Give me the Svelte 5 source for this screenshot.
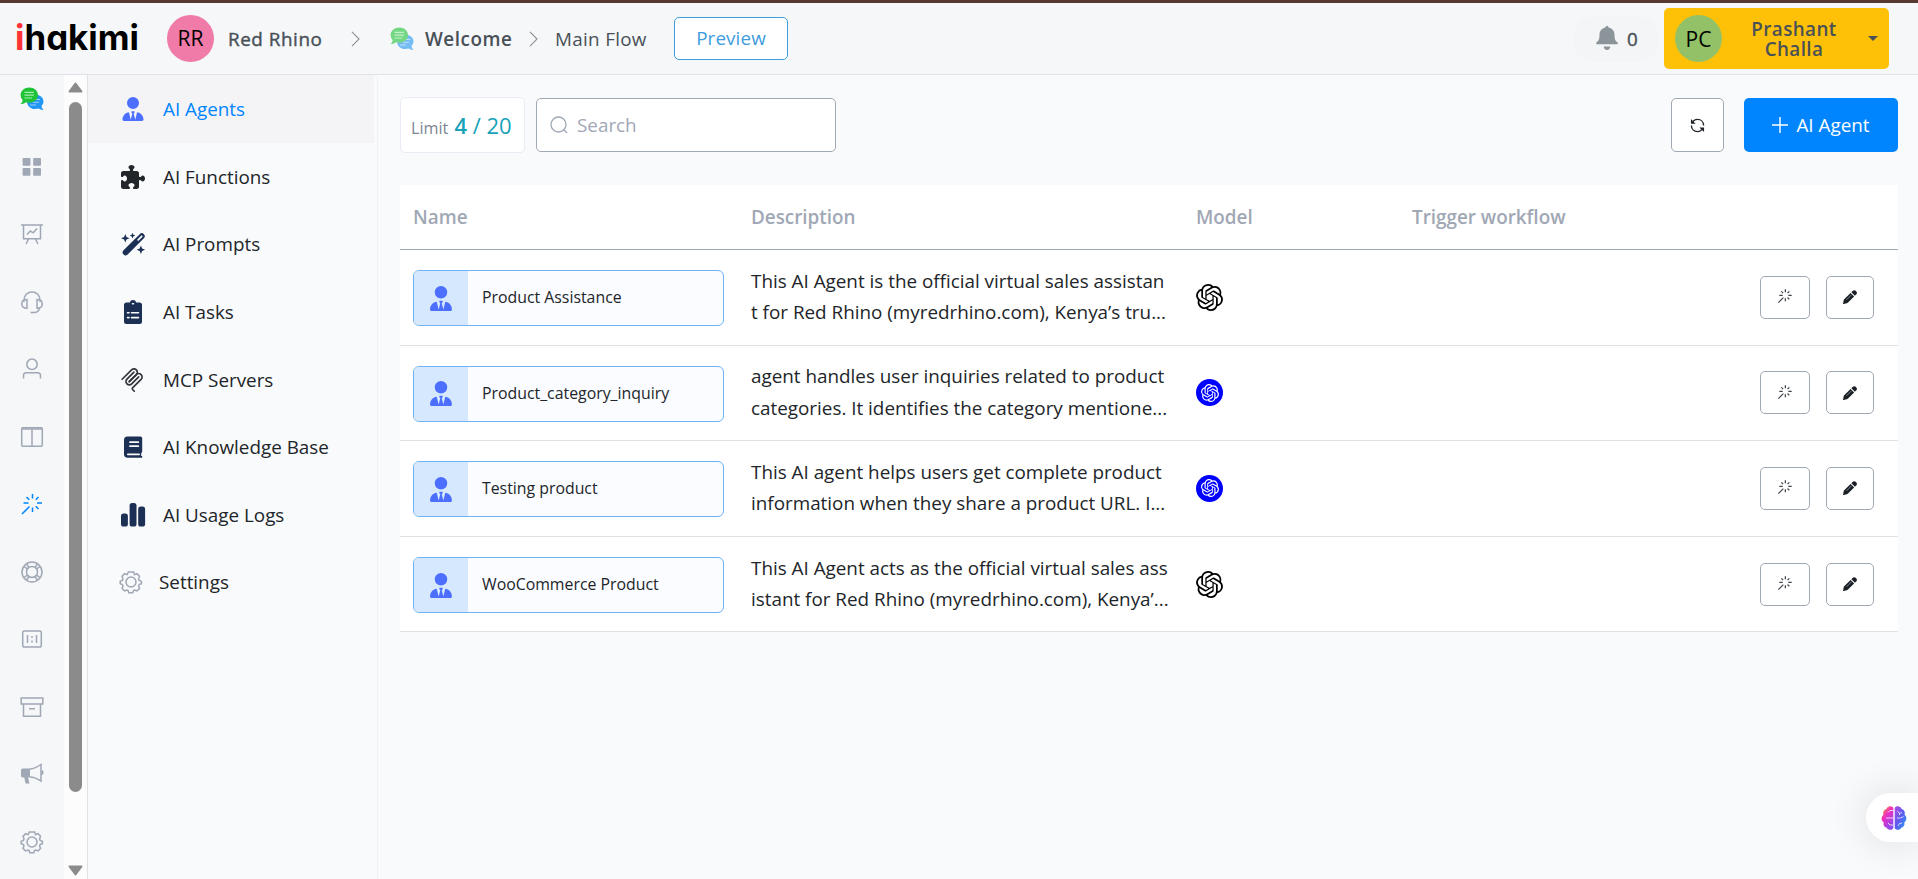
<script>
const railIcons = [
    { name: 'dashboard', body: '<g fill="currentColor" stroke="none"><rect x="2.6" y="3" width="7.8" height="7.8" rx=".8"/><rect x="13.2" y="3" width="7.8" height="7.8" rx=".8"/><rect x="2.6" y="13" width="7.8" height="7.8" rx=".8"/><rect x="13.2" y="13" width="7.8" height="7.8" rx=".8"/></g>' },
    { name: 'reports', body: '<path d="M1 2.9h22M3.5 3v13.7h17V3M8.5 17l-2.400 5M15.500 17l2.400 5M7 12.500l3.300-3.500 3 1.800L17 6.500"/>' },
    { name: 'support', body: '<path d="M4 12V9.500C4 5.500 7.500 2 12 2s8 3.500 8 7.500V12M7 9.500v8.700c-3.300 0-5.300-1.300-5.300-4.300S3.700 9.500 7 9.500zM17 9.500v8.700c3.300 0 5.300-1.300 5.300-4.300S20.300 9.500 17 9.500zM19.500 17.500c0 3-2.500 4.900-5.500 4.900h-3.500"/>' },
    { name: 'contacts', body: '<circle cx="12" cy="7.300" r="5.200"/><path d="M3.500 21.500v-3c0-1.800 1.200-2.800 3-2.800h11c1.800 0 3 1 3 2.800v3"/>' },
    { name: 'board', body: '<rect x="1.700" y="2.700" width="20.600" height="18.600" rx="1"/><path d="M1.700 4h20.600M12 4v17"/>' },
    { name: 'ai', active: true, body: '<path d="M12.500 2v4.500M12.500 15.500V20M3.500 11h5M17 11h5M6.500 5l2.700 2.700M18.500 5l-2.700 2.700M18.500 17l-2.700-2.700M2 22l7.500-7.500"/>' },
    { name: 'help', body: '<circle cx="12" cy="12" r="10"/><circle cx="12" cy="12" r="5.500"/><path d="M4.300 6.700l3 2.200M6.700 4.300l2.200 3M19.700 6.700l-3 2.200M17.300 4.300l-2.200 3M4.300 17.300l3-2.200M6.700 19.700l2.200-3M19.700 17.300l-3-2.200M17.300 19.700l-2.200-3"/>' },
    { name: 'limits', body: '<rect x="2.700" y="4" width="18.600" height="16" rx="1.800"/><path d="M7.500 8v8M16.500 8v8M12 9v2M12 13.500v2"/>' },
    { name: 'archive', body: '<path d="M1.200 3h21.600v6H1.200zM3.500 9v12.300h17V9M9 13.800h6"/>' },
    { name: 'campaigns', body: '<path d="M1 8.500c0-1.200.8-2 2-2h7v9H8l1.500 6H5.500l-1.200-6H3c-1.200 0-2-.8-2-2z" fill="currentColor" stroke="none"/><path d="M10 7c4-.3 7.500-2 11-4.500v16.500c-3.500-2.200-7-3.800-11-4M22 8.500c1 .8 1 3.200 0 4"/>' },
    { name: 'settings', body: '<path d="M9.300 2h5.400l.7 2.600 2.600-.9 2.500 2.600-.9 2.600.6 1.500 2.200.8v2.500l-2.200.8-.6 1.500 1 2.400-2.500 2.500-2.500-.9-1.100.5-.7 2.200h-4l-.7-2.200-1.100-.5-2.500.9L3 18.400l1-2.400-.6-1.500-2.200-.8v-2.500l2.200-.8.6-1.500-.9-2.600 2.500-2.600 2.600.9z"/><circle cx="12" cy="12" r="5"/>' }
];

const gear = railIcons[railIcons.length - 1].body;
const tie = '<path d="M96 128a128 128 0 1 0 256 0A128 128 0 1 0 96 128zm94.500 200.200l18.600 31L175.800 483.100l-36-146.900c-2-8.100-9.800-13.400-17.900-11.300C51.900 342.400 0 405.800 0 481.300c0 17 13.800 30.700 30.700 30.700H417.300c17 0 30.700-13.800 30.700-30.700c0-75.500-51.900-138.900-121.900-156.400c-8.100-2-15.900 3.300-17.900 11.300l-36 146.900L238.900 359.200l18.600-31c6.400-10.700-1.300-24.200-13.700-24.200h-39.500c-12.400 0-20.100 13.600-13.700 24.200z"/>';

const menu = [
    { label: 'AI Agents', active: true, box: '-32 0 512 512', color: '#4c6fff', body: tie },
    { label: 'AI Functions', box: '0 0 512 512', color: '#22262b', body: '<path d="M192 104.800c0-9.200-5.800-17.300-13.200-22.800C167.200 73.300 160 61.300 160 48c0-26.500 28.700-48 64-48s64 21.500 64 48c0 13.300-7.200 25.300-18.800 34c-7.400 5.500-13.200 13.600-13.200 22.800c0 12.800 10.400 23.200 23.200 23.200l56.800 0c26.500 0 48 21.500 48 48l0 56.800c0 12.800 10.400 23.200 23.200 23.200c9.200 0 17.300-5.800 22.800-13.200c8.700-11.600 20.700-18.800 34-18.800c26.500 0 48 28.700 48 64s-21.500 64-48 64c-13.300 0-25.300-7.200-34-18.800c-5.500-7.400-13.600-13.200-22.800-13.200c-12.800 0-23.200 10.400-23.200 23.200L384 464c0 26.500-21.500 48-48 48l-56.800 0c-12.800 0-23.200-10.400-23.200-23.200c0-9.200 5.800-17.300 13.200-22.800c11.600-8.700 18.800-20.700 18.800-34c0-26.500-28.700-48-64-48s-64 21.500-64 48c0 13.300 7.200 25.300 18.800 34c7.400 5.500 13.200 13.600 13.200 22.800c0 12.800-10.400 23.200-23.200 23.200L48 512c-26.500 0-48-21.500-48-48L0 343.200C0 330.400 10.400 320 23.200 320c9.200 0 17.300 5.800 22.800 13.200C54.700 344.800 66.700 352 80 352c26.500 0 48-28.700 48-64s-21.500-64-48-64c-13.300 0-25.300 7.200-34 18.800C40.500 250.200 32.400 256 23.200 256C10.400 256 0 245.600 0 232.800L0 176c0-26.500 21.500-48 48-48l120.800 0c12.800 0 23.200-10.400 23.200-23.200z"/>' },
    { label: 'AI Prompts', box: '0 0 24 24', color: '#1c2f55', body: '<path d="M4.600 20.400L20.800 4.200" stroke="currentColor" stroke-width="5.800" stroke-linecap="round"/><path d="M17.200 7.800l3.500-3.500" stroke="#f9fafc" stroke-width="1.800" stroke-linecap="round"/><path d="M4.300 2l1.200 3 3 1.200-3 1.200-1.200 3-1.200-3-3-1.200 3-1.200zM11.500.8l.8 2 2 .8-2 .8-.8 2-.8-2-2-.8 2-.8zM19.900 13.500l1.200 3 3 1.200-3 1.200-1.200 3-1.200-3-3-1.200 3-1.200z"/>' },
    { label: 'AI Tasks', box: '0 0 24 24', color: '#1c2f55', body: '<path d="M5.500 2.500h3.300a3.300 3.300 0 0 1 6.400 0h3.300A2.500 2.500 0 0 1 21 5v16.500a2.500 2.500 0 0 1-2.500 2.500h-13A2.500 2.500 0 0 1 3 21.500V5a2.500 2.500 0 0 1 2.500-2.500z"/><path d="M10.500 12.700h7M10.500 17.600h7M6.500 12.700h1.500M6.500 17.600h1.500M11.500 3.700h1" stroke="#f9fafc" stroke-width="1.600" stroke-linecap="round"/>' },
    { label: 'MCP Servers', box: '10 4 172 172', color: '#32363b', body: '<g fill="none" stroke="currentColor" stroke-width="12" stroke-linecap="round"><path d="M18 84.853L85.882 16.971c9.373-9.373 24.569-9.373 33.941 0s9.373 24.568 0 33.941L68.558 102.177"/><path d="M69.265 101.470L119.823 50.912c9.373-9.373 24.569-9.373 33.942 0l.353.353c9.373 9.373 9.373 24.569 0 33.941L92.725 146.600c-3.124 3.124-3.124 8.189 0 11.313l12.606 12.607"/><path d="M102.853 33.941L52.648 84.146c-9.372 9.372-9.372 24.568 0 33.941s24.569 9.372 33.941 0L136.794 67.882"/></g>' },
    { label: 'AI Knowledge Base', box: '0 0 24 24', color: '#1c2f55', body: '<path d="M6.500 1.500h13A1.700 1.700 0 0 1 21.200 3v13.500c0 .7-.4 1.200-1 1.500v3h1v1.800H6.500A3.600 3.600 0 0 1 3 19.300V5a3.500 3.500 0 0 1 3.500-3.500z"/><path d="M9 7.200h8.300M9 11.200h8.300M6.800 19.300h11.400" stroke="#f9fafc" stroke-width="1.700" stroke-linecap="round"/>' },
    { label: 'AI Usage Logs', box: '0 0 24 24', color: '#1c2f55', body: '<rect x="0" y="10.500" width="6.900" height="13" rx="2.600"/><rect x="8.600" y="0" width="6.900" height="23.500" rx="2.600"/><rect x="17.200" y="3.500" width="6.900" height="20" rx="2.600"/>' },
    { label: 'Settings', outline: true, box: '0 0 24 24', color: '#a3aab5', body: gear }
];

const agents = [
    { name: 'Product Assistance', lines: ['This AI Agent is the official virtual sales assistan', 't for Red Rhino (myredrhino.com), Kenya’s tru...'], badge: false },
    { name: 'Product_category_inquiry', lines: ['agent handles user inquiries related to product', 'categories. It identifies the category mentione...'], badge: true },
    { name: 'Testing product', lines: ['This AI agent helps users get complete product', 'information when they share a product URL. I...'], badge: true },
    { name: 'WooCommerce Product', lines: ['This AI Agent acts as the official virtual sales ass', 'istant for Red Rhino (myredrhino.com), Kenya’...'], badge: false }
];

let search = '';
</script>

{#snippet chat()}
    <svg class="chat" viewBox="0 0 24 24">
        <path d="M15 7.500c4.700 0 8.500 3 8.500 6.800 0 2-.9 3.500-2 4.600.3 1.800 1 3 2.300 4.100-2.200.1-3.800-.5-5.200-1.400-1 .3-2.200.5-3.600.5-4.500 0-8-3.300-8-7.300z" fill="#2196f3"/>
        <path d="M14 12.500h6M13 15.300h6M10 18h6" stroke="#9fd0fa" stroke-width="1.100"/>
        <path d="M9.300.5c4.900 0 8.700 3.400 8.700 7.600s-3.800 7.600-8.700 7.600c-1.200 0-2.300-.2-3.300-.5-1.500 1.200-3.300 1.900-5.500 1.800 1.300-1.200 2-2.300 2.200-3.800A7.400 7.400 0 0 1 .6 8.100C.6 3.900 4.400.5 9.300.5z" fill="#1ec337"/>
        <path d="M4.500 5.300h9.300M4.500 8.200h9.300M4.500 11h7.500" stroke="#a8ecb1" stroke-width="1.200"/>
    </svg>
{/snippet}

{#snippet openai(cls)}
    <svg class={cls} viewBox="0 0 24 24" fill="currentColor">
        <path d="M22.2819 9.8211a5.9847 5.9847 0 0 0-.5157-4.9108 6.0462 6.0462 0 0 0-6.5098-2.9A6.0651 6.0651 0 0 0 4.9807 4.1818a5.9847 5.9847 0 0 0-3.9977 2.9 6.0462 6.0462 0 0 0 .7427 7.0966 5.98 5.98 0 0 0 .511 4.9107 6.051 6.051 0 0 0 6.5146 2.9001A5.9847 5.9847 0 0 0 13.2599 24a6.0557 6.0557 0 0 0 5.7718-4.2058 5.9894 5.9894 0 0 0 3.9977-2.9001 6.0557 6.0557 0 0 0-.7475-7.0729zm-9.022 12.6081a4.4755 4.4755 0 0 1-2.8764-1.0408l.1419-.0804 4.7783-2.7582a.7948.7948 0 0 0 .3927-.6813v-6.7369l2.02 1.1686a.071.071 0 0 1 .038.052v5.5826a4.504 4.504 0 0 1-4.4945 4.4944zm-9.6607-4.1254a4.4708 4.4708 0 0 1-.5346-3.0137l.142.0852 4.783 2.7582a.7712.7712 0 0 0 .7806 0l5.8428-3.3685v2.3324a.0804.0804 0 0 1-.0332.0615L9.74 19.9502a4.4992 4.4992 0 0 1-6.1408-1.6464zM2.3408 7.8956a4.485 4.485 0 0 1 2.3655-1.9728V11.6a.7664.7664 0 0 0 .3879.6765l5.8144 3.3543-2.0201 1.1685a.0757.0757 0 0 1-.071 0l-4.8303-2.7865A4.504 4.504 0 0 1 2.3408 7.872zm16.5963 3.8558L13.1038 8.364 15.1192 7.2a.0757.0757 0 0 1 .071 0l4.8303 2.7913a4.4944 4.4944 0 0 1-.6765 8.1042v-5.6772a.79.79 0 0 0-.407-.667zm2.0107-3.0231l-.142-.0852-4.7735-2.7818a.7759.7759 0 0 0-.7854 0L9.409 9.2297V6.8974a.0662.0662 0 0 1 .0284-.0615l4.8303-2.7866a4.4992 4.4992 0 0 1 6.6802 4.66zM8.3065 12.863l-2.02-1.1638a.0804.0804 0 0 1-.038-.0567V6.0742a4.4992 4.4992 0 0 1 7.3757-3.4537l-.142.0805L8.704 5.459a.7948.7948 0 0 0-.3927.6813zm1.0976-2.3654l2.602-1.4998 2.6069 1.4998v2.9994l-2.5974 1.4997-2.6067-1.4997Z"/>
    </svg>
{/snippet}

<div class="app">
    <header class="topbar">
        <svg class="logo" width="126" height="36" viewBox="0 0 126 36">
            <text y="29" textLength="124" lengthAdjust="spacingAndGlyphs"><tspan fill="#ff3336">i</tspan>hakimi</text>
        </svg>
        <span class="avatar pink">RR</span>
        <span class="crumb org">Red Rhino</span>
        <svg class="chevron" viewBox="0 0 10 18"><path d="M1 1l8 8-8 8"/></svg>
        <span class="faded">{@render chat()}</span>
        <span class="crumb bot">Welcome</span>
        <svg class="chevron" viewBox="0 0 10 18"><path d="M1 1l8 8-8 8"/></svg>
        <span class="crumb flow">Main Flow</span>
        <button class="preview">Preview</button>
        <div class="bell">
            <svg width="22" height="25" viewBox="0 0 22 25" fill="#8b9499">
                <path d="M11 0c.9 0 1.500.7 1.500 1.600 3.600.7 6 3.500 6 7.200 0 4.500.9 6 3 7.700.8.700.5 1.700-.6 1.700H1.100c-1.100 0-1.400-1-.6-1.700 2.100-1.700 3-3.200 3-7.700 0-3.700 2.400-6.500 6-7.200C9.500.7 10.100 0 11 0zM7.700 20.500h6.600c-.2 2.100-1.500 3.500-3.300 3.500s-3.100-1.400-3.300-3.500z"/>
            </svg>
            <span>0</span>
        </div>
        <button class="profile">
            <span class="avatar green">PC</span>
            <span class="profile-name">Prashant Challa</span>
            <span class="caret"></span>
        </button>
    </header>

    <div class="body">
        <nav class="rail">
            {@render chat()}
            {#each railIcons as icon (icon.name)}
                <svg class="rail-icon" class:active={icon.active} viewBox="0 0 24 24">{@html icon.body}</svg>
            {/each}
        </nav>

        <div class="scrollbar">
            <svg width="15" height="11" viewBox="0 0 15 11"><path d="M7.500 1.500L13.500 9.500H1.500z"/></svg>
            <div class="thumb"></div>
            <svg width="15" height="11" viewBox="0 0 15 11"><path d="M7.500 9.500L13.500 1.500H1.500z"/></svg>
        </div>

        <aside class="menu">
            {#each menu as item (item.label)}
                <a href="#top" class="menu-item" class:active={item.active} class:plain={item.outline}>
                    <svg class:outline={item.outline} viewBox={item.box} color={item.color} fill="currentColor">{@html item.body}</svg>
                    <span>{item.label}</span>
                </a>
            {/each}
        </aside>

        <main>
            <div class="toolbar">
                <div class="limit">Limit <span><b>4</b> / 20</span></div>
                <label class="search">
                    <svg width="18" height="18" viewBox="0 0 18 18"><circle cx="8.500" cy="8.500" r="7.500"/><path d="M13.500 13.500l3.500 3.500"/></svg>
                    <input placeholder="Search" bind:value={search} />
                </label>
                <button class="refresh" aria-label="Refresh">
                    <svg width="15" height="15" viewBox="0 0 16 16"><path d="M2.500 5C3.500 2.800 5.500 1.500 8 1.500c3.800 0 6.500 2.800 6.500 6.500M13.500 11c-1 2.200-3 3.500-5.500 3.500-3.800 0-6.500-2.800-6.500-6.500"/><path class="tip" d="M1 1v5h5zM15 15v-5h-5z"/></svg>
                </button>
                <button class="add">
                    <svg width="16" height="16" viewBox="0 0 16 16"><path d="M8 0v16M0 8h16"/></svg>
                    AI Agent
                </button>
            </div>

            <div class="table">
                <div class="row head">
                    <span>Name</span>
                    <span>Description</span>
                    <span>Model</span>
                    <span>Trigger workflow</span>
                </div>
                {#each agents as agent (agent.name)}
                    <div class="row">
                        <div class="agent">
                            <span class="agent-icon"><svg width="22" height="25" viewBox="0 0 448 512" fill="#4c6fff">{@html tie}</svg></span>
                            <span class="agent-name">{agent.name}</span>
                        </div>
                        <div class="description">
                            {#each agent.lines as line}
                                <div>{line}</div>
                            {/each}
                        </div>
                        <div class="model">
                            {#if agent.badge}
                                <span class="badge">{@render openai('small')}</span>
                            {:else}
                                {@render openai('large')}
                            {/if}
                        </div>
                        <div></div>
                        <div class="actions">
                            <button class="magic" aria-label="Test">
                                <svg width="16" height="16" viewBox="0 0 24 24">{@html railIcons[5].body}</svg>
                            </button>
                            <button class="edit" aria-label="Edit">
                                <svg width="14" height="14" viewBox="0 0 14 14" fill="#1b2026"><path d="M9.800.8c.9-.9 2-.9 2.900 0l.6.6c.9.9.9 2 0 2.900L11.900 5.700 8.400 2.200zM7.600 3l3.500 3.500-6.300 6.300c-.3.3-.6.4-1 .5L.6 13.900c-.4.1-.6-.1-.5-.5l.6-3.200c.1-.4.2-.7.5-1z"/><path d="M3.500 9.800l5-5" stroke="#9299a3" stroke-width=".8"/></svg>
                            </button>
                        </div>
                    </div>
                {/each}
            </div>
        </main>
    </div>

    <button class="brain" aria-label="Assistant">
        <svg width="26" height="26" viewBox="0 0 26 26">
            <defs>
                <linearGradient id="left" x1="0" y1="0" x2=".6" y2="1">
                    <stop offset="0" stop-color="#ffa31a" />
                    <stop offset=".45" stop-color="#ee2fc0" />
                    <stop offset="1" stop-color="#8f4af0" />
                </linearGradient>
                <linearGradient id="right" x1="0" y1="0" x2="1" y2="1">
                    <stop offset="0" stop-color="#b04ae0" />
                    <stop offset=".5" stop-color="#5b5cf0" />
                    <stop offset="1" stop-color="#23a8f5" />
                </linearGradient>
            </defs>
            <path fill="url(#left)" d="M12.300 3v20c-1 2.500-5.500 2.300-6.500-.3-2.500-.6-4-3-3-5.300C0 16 0 11.500 2.300 10 1.600 6.500 3 4.500 5.300 4 6.500.8 11 .2 12.300 3z"/>
            <path fill="url(#right)" d="M13.700 3v20c1 2.500 5.500 2.300 6.500-.3 2.500-.6 4-3 3-5.300 2.800-1.400 2.800-5.900.5-7.400.7-3.500-.7-5.500-3-6C19.500.8 15 .2 13.700 3z"/>
            <path d="M12 5.500H9L7 7.500M12 13H5M12 20H9L7 18M16.500 6l2 2.500 2.500-1M18.500 8.500V10M16 13h3.500l3-1.500M17 21l1.500-2.500L21 18" stroke="#fff" stroke-opacity=".75" fill="none"/>
        </svg>
    </button>
</div>

<style>
:global(body) {
    margin: 0;
    overflow: hidden;
}

.app {
    position: relative;

    display: flex;
    flex-direction: column;
    box-sizing: border-box;
    height: 879px;
    border-top: 3px solid #583932;

    color: #212529;
    font-family: "Open Sans", "Noto Sans", sans-serif;
    font-size: 18.85px;
    line-height: 1.5;

    background: #f9fafc;
}

button {
    box-sizing: border-box;
    padding: 0;

    font: inherit;

    border: 1px solid #a0a7b5;
    border-radius: 5px;
    background: #fff;
}

svg {
    flex: none;
    overflow: visible;
}

.topbar {
    display: flex;
    flex: none;
    align-items: center;
    box-sizing: border-box;
    height: 72px;
    padding: 0 29px 0 15px;

    border-bottom: 1px solid #dfe2e6;
    background: #f5f7f9;
}

.logo text {
    font-family: Inter, sans-serif;
    font-size: 35px;
    font-weight: 700;
    font-feature-settings: "cv11";
}

.avatar {
    display: flex;
    flex: none;
    align-items: center;
    justify-content: center;
    width: 47px;
    height: 47px;

    color: #000;
    font-size: 21px;

    border-radius: 50%;
}

.avatar.pink {
    margin-left: 26px;
    background: #f07aa8;
}

.avatar.green {
    background: #93c167;
}

.crumb {
    padding-top: 1px;

    color: #495057;
    white-space: nowrap;
}

.crumb.org {
    width: 123px;
    margin-left: 14px;
    letter-spacing: 0.55px;
    -webkit-text-stroke: 0.4px;
}

.crumb.bot {
    width: 104px;
    margin-left: 12px;
    font-weight: 600;
    letter-spacing: 0.55px;
}

.crumb.flow {
    width: 119px;
    margin-left: 17px;
    letter-spacing: 0.3px;
}

.chevron {
    width: 9px;
    height: 16px;

    fill: none;
    stroke: #8b9095;
    stroke-width: 1.2;
}

.chat {
    width: 24px;
    height: 24px;
}

.faded {
    display: flex;
    margin-left: 30px;
    opacity: 0.6;
}

.crumb.bot {
    margin-left: 11px;
}

.preview {
    width: 114px;
    height: 43px;

    color: #3d9ddd;
    letter-spacing: 0.1px;

    border-color: #3d9ddd;
}

.bell {
    display: flex;
    align-items: center;
    gap: 9px;
    box-sizing: border-box;
    width: 86px;
    height: 46px;
    margin-left: auto;
    padding-left: 23px;

    color: #495057;

    border-radius: 23px;
    background: #f4f5f7;
}

.bell span {
    padding-top: 2px;
    -webkit-text-stroke: 0.4px;
}

.profile {
    display: flex;
    align-items: center;
    width: 225px;
    height: 61px;
    margin-left: 5px;
    padding: 0 11px;

    color: #495057;
    font-weight: 600;
    line-height: 20px;
    letter-spacing: 0.4px;

    border: 0;
    background: #ffc107;
}

.profile .avatar {
    font-weight: 400;
    letter-spacing: 0;
}

.profile-name {
    width: 100px;
    margin-left: 22px;
}

.caret {
    margin-left: auto;

    border: 5px solid transparent;
    border-top-color: #495057;
    border-bottom: 0;
}

.body {
    display: flex;
    flex: 1;
    min-height: 0;
}

.rail {
    display: flex;
    flex-direction: column;
    align-items: center;
    gap: 43.55px;
    box-sizing: border-box;
    width: 64px;
    padding-top: 12px;

    background: #f5f7f9;
}

.rail-icon,
.outline {
    width: 24px;
    height: 24px;

    color: #a0a7b5;
    fill: none;
    stroke: currentColor;
    stroke-width: 1.5;
}

.rail-icon.active {
    color: #0085ff;
}

.scrollbar {
    display: flex;
    flex-direction: column;
    align-items: center;
    box-sizing: border-box;
    width: 24px;
    padding: 7px 0 3px;

    border-right: 1px solid #dee2e6;
    background: #fcfcfc;
}

.scrollbar path {
    fill: #8b8b8b;
    stroke: #8b8b8b;
    stroke-width: 2;
    stroke-linejoin: round;
}

.thumb {
    width: 13px;
    height: 690px;
    margin: 9px 0 auto;

    border-radius: 7px;
    background: #8b8b8b;
}

.menu {
    box-sizing: border-box;
    width: 290px;
    padding-right: 3px;

    border-right: 1px solid #f0f1f4;
    background: #f9fafc;
}

.menu-item {
    display: flex;
    align-items: center;
    gap: 18px;
    box-sizing: border-box;
    height: 67.6px;
    padding: 1px 0 0 33px;

    color: #212529;
    text-decoration: none;
}

.menu-item.active {
    color: #0085ff;
    background: #f4f4f6;
}

.menu-item.plain {
    gap: 16px;
    padding-left: 31px;
}

.menu-item svg {
    width: 24px;
    height: 24px;
}

main {
    flex: 1;
    padding: 22px 20px 0 22px;
}

.toolbar {
    display: flex;
    align-items: center;
    height: 56px;
    margin-bottom: 32px;
}

.limit {
    display: flex;
    align-items: baseline;
    gap: 6px;
    box-sizing: border-box;
    width: 125px;
    height: 56px;
    padding-left: 10px;

    color: #7d8690;
    font-size: 16.2px;
    line-height: 54px;

    border: 1px solid #e9ecf4;
    border-radius: 5px;
    background: #fff;
}

.limit span {
    color: #17a2b8;
    font-size: 22px;
}

.limit b {
    font-weight: 600;
}

.search {
    display: flex;
    align-items: center;
    gap: 9px;
    box-sizing: border-box;
    width: 300px;
    height: 54px;
    margin-left: 11px;
    padding-left: 13px;

    border: 1px solid #a0a7b5;
    border-radius: 5px;
    background: #fff;
}

.search svg {
    fill: none;
    stroke: #a0a7b5;
    stroke-width: 1.3;
}

.search input {
    width: 220px;
    padding: 0;

    color: #212529;
    font: inherit;

    border: 0;
    background: transparent;
    outline: 0;
}

.search input::placeholder {
    color: #a0a7b5;
}

.refresh,
.actions button {
    display: flex;
    align-items: center;
    justify-content: center;
}

.refresh {
    width: 53px;
    height: 54px;
    margin: 0 20px 0 auto;
}

.refresh svg {
    fill: none;
    stroke: #212529;
    stroke-width: 1.5;
}

.refresh .tip {
    fill: #212529;
    stroke: none;
}

.add {
    display: flex;
    align-items: center;
    justify-content: center;
    gap: 8px;
    width: 154px;
    height: 54px;

    color: #fff;

    border: 0;
    background: #0085ff;
}

.add svg {
    stroke: #fff;
    stroke-width: 1.4;
}

.table {
    background: #fff;
}

.row {
    display: grid;
    grid-template-columns: 338px 445px 216px 1fr auto;
    align-items: center;
    box-sizing: border-box;
    height: 95.6px;
    padding: 0 24px 0 13px;

    border-bottom: 1px solid #dee2e6;
}

.row.head {
    height: 65px;

    color: #a0a7b5;
    font-weight: 600;

    border-bottom-color: #a0a7b5;
}

.agent {
    display: flex;
    box-sizing: border-box;
    width: 311px;
    height: 56px;
    margin-top: 2px;
    overflow: hidden;

    border: 1px solid #6fb3f5;
    border-radius: 6px;
    background: #fbfcff;
}

.agent-icon {
    display: flex;
    align-items: center;
    justify-content: center;
    width: 54px;

    background: #d6e8fd;
}

.agent-name {
    padding-left: 14px;

    font-size: 15.85px;
    line-height: 53px;
}

.description {
    line-height: 31.5px;
    white-space: nowrap;
}

.model {
    display: flex;
    color: #000;
}

.model :global(.large) {
    width: 27px;
    height: 27px;
}

.model :global(.small) {
    width: 18px;
    height: 18px;
}

.badge {
    display: flex;
    align-items: center;
    justify-content: center;
    width: 27px;
    height: 27px;

    color: #fff;

    border-radius: 50%;
    background: #0000ff;
}

.actions {
    display: flex;
    gap: 16px;
}

.actions button {
    height: 43px;
}

.actions .magic {
    width: 50px;
    padding-bottom: 2px;
}

.magic svg {
    fill: none;
    stroke: #3c424a;
    stroke-width: 1.8;
}

.actions .edit {
    width: 48px;
}

.brain {
    position: absolute;
    right: 0;
    bottom: 37px;

    display: flex;
    align-items: center;
    width: 52px;
    height: 49px;
    padding-left: 15px;

    border: 0;
    border-radius: 25px 0 0 25px;
    box-shadow: 0 0 40px rgba(0, 0, 0, 0.12);
}
</style>
